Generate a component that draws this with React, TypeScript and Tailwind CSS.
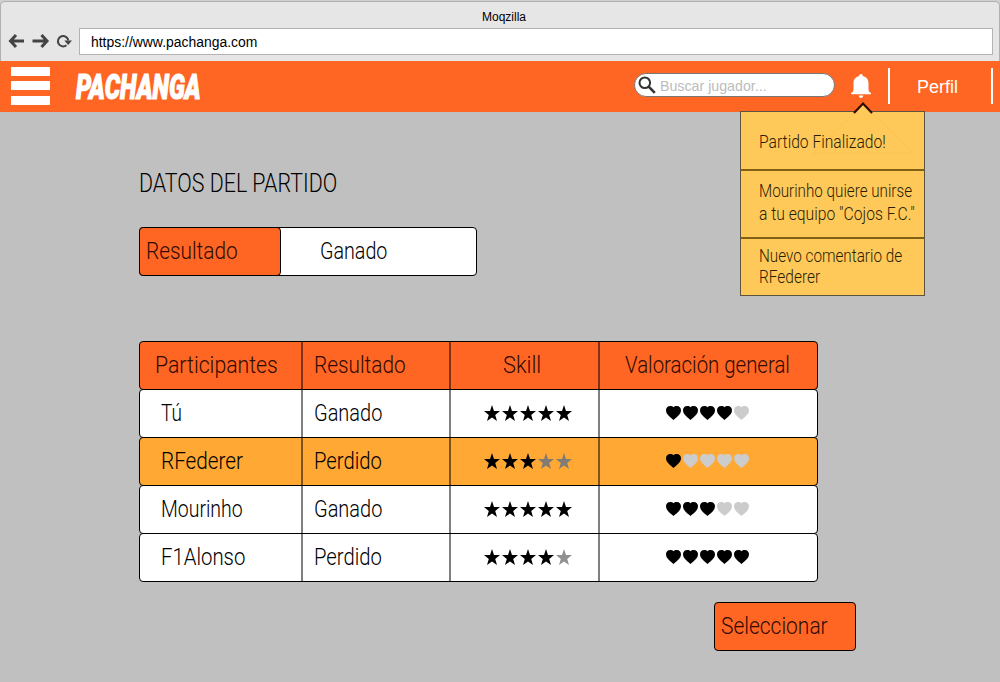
import { useLayoutEffect, useRef, useState } from "react";

function Fit({ w, className = "", children }: { w: number; className?: string; children: string }) {
  const ref = useRef<HTMLSpanElement>(null);
  const [scale, setScale] = useState(1);
  useLayoutEffect(() => {
    if (ref.current) setScale(w / ref.current.offsetWidth);
  }, [w, children]);
  return (
    <span className={`block whitespace-nowrap ${className}`} style={{ width: w }}>
      <span ref={ref} className="inline-block origin-left" style={{ transform: `scaleX(${scale})` }}>
        {children}
      </span>
    </span>
  );
}

const STAR = "M8 0 L10 6 L16 6.1 L11.2 9.9 L13 16 L8 12.4 L3 16 L4.8 9.9 L0 6.1 L6 6 Z";
const HEART =
  "M7.5 14 C5.6 12 0 9 0 4.3 C0 1.7 1.7 0 4.2 0 C5.8 0 6.9 .4 7.5 1.3 C8.1 .4 9.2 0 10.8 0 C13.3 0 15 1.7 15 4.3 C15 9 9.4 12 7.5 14 Z";

function Stars({ n, off }: { n: number; off: string }) {
  return (
    <div className="flex gap-[2px]">
      {[0, 1, 2, 3, 4].map((i) => (
        <svg key={i} viewBox="0 0 16 16" className={`h-4 w-4 ${i < n ? "fill-black" : off}`}>
          <path d={STAR} />
        </svg>
      ))}
    </div>
  );
}

function Hearts({ n }: { n: number }) {
  return (
    <div className="flex gap-[2px]">
      {[0, 1, 2, 3, 4].map((i) => (
        <svg key={i} viewBox="0 0 15 14" className={`h-[14px] w-[15px] ${i < n ? "fill-black" : "fill-[#cccccc]"}`}>
          <path d={HEART} />
        </svg>
      ))}
    </div>
  );
}

const ROWS = [
  { name: "Tú", nw: 21, res: "Ganado", stars: 5, hearts: 4, bg: "bg-white", off: "fill-[#999999]" },
  { name: "RFederer", nw: 82, res: "Perdido", stars: 3, hearts: 1, bg: "bg-[#ffa834]", off: "fill-[#807b74]" },
  { name: "Mourinho", nw: 82, res: "Ganado", stars: 5, hearts: 3, bg: "bg-white", off: "fill-[#999999]" },
  { name: "F1Alonso", nw: 84, res: "Perdido", stars: 4, hearts: 5, bg: "bg-white", off: "fill-[#909090]" },
];

const CELL = "flex items-center border-r-2 border-black/50 pb-[2px]";
const ROW = "flex h-[49px] w-[679px] rounded-[4px] border border-black";

export default function App() {
  return (
    <div className="flex h-[682px] w-[1000px] flex-col overflow-hidden bg-[#c0c0c0] font-['Roboto',sans-serif] text-[23.5px] leading-[26px] font-light text-black">
      <div className="h-[61px] shrink-0 bg-[#d0d0d0] pt-px font-['Liberation_Sans',sans-serif] font-normal">
        <div className="flex h-[60px] flex-col rounded-t-[5px] border border-b-0 border-[#b0b0b0] bg-[#e6e6e6]">
          <div className="flex h-[26px] justify-center pt-[7px] pl-[8px] text-[12px] leading-[16px]">Moqzilla</div>
          <div className="flex items-center pl-[7px]">
            <svg viewBox="0 0 66 20" className="mb-px h-5 w-[66px] fill-none stroke-[#444] stroke-[3]">
              <path d="M2.500 10H16M8 4L2.500 10L8 16" />
              <path d="M24.500 10H39M33.500 4L39 10L33.500 16" />
              <path d="M58.500 14.200A5.200 5.200 0 1 1 60.300 9.500" className="stroke-2" />
              <path d="M56.300 9.500H64L60.200 14Z" className="fill-[#444] stroke-none" />
            </svg>
            <div className="ml-[5px] flex h-[27px] w-[914px] items-center border border-[#b3b3b3] bg-white pl-[11px] text-[14px]">
              <Fit w={166}>https://www.pachanga.com</Fit>
            </div>
          </div>
        </div>
      </div>

      <header className="flex h-[51px] shrink-0 items-center bg-[#ff6624] pb-[2px]">
        <div className="ml-[11px] flex h-[38px] w-[39px] flex-col justify-between">
          <div className="h-[9px] bg-white" />
          <div className="h-[9px] bg-white" />
          <div className="h-[9px] bg-white" />
        </div>
        <Fit w={125} className="ml-[26px] pt-[4px] text-[35px] leading-[46px] font-black text-white italic [-webkit-text-stroke:1.2px_white]">PACHANGA</Fit>
        <div className="mb-[2px] ml-[433px] flex h-[24px] w-[201px] items-center rounded-full border border-[#777] bg-white pl-[3px] font-['Liberation_Sans',sans-serif] text-[15px] font-normal text-[#bcbcbc]">
          <svg viewBox="0 0 18 18" className="mr-[4px] h-[18px] w-[18px] fill-none stroke-[#333]">
            <circle cx="6.800" cy="6.800" r="5.300" className="stroke-2" />
            <path d="M10.700 10.700L16.800 16.800" className="stroke-[2.600]" />
          </svg>
          <Fit w={107} className="pt-[2px]">Buscar jugador...</Fit>
        </div>
        <svg viewBox="0 0 20 24" className="ml-[16px] h-6 w-5 fill-white">
          <path d="M10 0C11.200 0 11.800 .8 11.800 2C15.500 2.800 17.500 5.500 17.500 9V15C17.500 17 18 18 20 19V20.300H0V19C2 18 2.500 17 2.500 15V9C2.500 5.500 4.500 2.800 8.200 2C8.200 .8 8.800 0 10 0ZM7.800 21.500H12.200C12.200 23 11.200 24 10 24S7.800 23 7.800 21.500Z" />
        </svg>
        <div className="ml-[17px] h-9 w-[2px] bg-white" />
        <Fit w={41} className="ml-[27px] pt-[2px] font-['Liberation_Sans',sans-serif] text-[18px] font-normal text-white">Perfil</Fit>
        <div className="ml-[33px] h-9 w-[2px] bg-white" />
      </header>

      <main className="flex items-start">
        <div className="w-[740px] shrink-0 pl-[139px]">
          <Fit w={198} className="mt-[58px] text-[25.500px]">DATOS DEL PARTIDO</Fit>
          <div className="mt-[31px] flex h-[49px] w-[338px] items-center rounded-[4px] border border-black bg-white">
            <div className="-my-px -ml-px flex h-[49px] w-[142px] items-center rounded-[4px] border border-black bg-[#ff6624] pb-[2px] pl-[6px] text-[#300b00]">
              <Fit w={92}>Resultado</Fit>
            </div>
            <Fit w={67} className="ml-[39px] pb-[2px]">Ganado</Fit>
          </div>
          <div className="mt-[65px]">
            <div className={`${ROW} bg-[#ff6624] text-[#300b00]`}>
              <div className={`${CELL} w-[163px] pl-[15px]`}><Fit w={123}>Participantes</Fit></div>
              <div className={`${CELL} w-[148px] pl-[11px]`}><Fit w={92}>Resultado</Fit></div>
              <div className={`${CELL} w-[149px] pl-[52px]`}><Fit w={38}>Skill</Fit></div>
              <div className="flex items-center pb-[2px] pl-[25px]"><Fit w={165}>Valoración general</Fit></div>
            </div>
            {ROWS.map((r) => (
              <div key={r.name} className={`${ROW} ${r.bg} -mt-px`}>
                <div className={`${CELL} w-[163px] pl-[21px]`}><Fit w={r.nw}>{r.name}</Fit></div>
                <div className={`${CELL} w-[148px] pl-[11px]`}><Fit w={68}>{r.res}</Fit></div>
                <div className={`${CELL} w-[149px] pl-[33px]`}><Stars n={r.stars} off={r.off} /></div>
                <div className="flex items-center pb-px pl-[66px]"><Hearts n={r.hearts} /></div>
              </div>
            ))}
          </div>
          <div className="mt-[20px] ml-[575px] flex h-[49px] w-[142px] items-center rounded-[4px] border border-black bg-[#ff6624] pb-[2px] pl-[6px] text-[#300b00]">
            <Fit w={107}>Seleccionar</Fit>
          </div>
        </div>

        <div className="relative -mt-px w-[185px] border border-[#5c5340] bg-[#ffc95a] text-[17.5px] leading-[23px] text-[#2b1d00]">
          <svg viewBox="0 0 104 54" className="absolute -top-[11px] left-[70px] h-[54px] w-[104px]">
            <path d="M52 3L2 52H102Z" className="fill-none stroke-[#fdc24f]" />
            <path d="M43 12L52 2.500L61 12" className="fill-[#ffc95a] stroke-[#300b00] stroke-[2.2]" />
          </svg>
          <div className="relative flex h-[57px] items-center pt-[3px] pl-[18px]"><Fit w={127}>Partido Finalizado!</Fit></div>
          <div className="flex h-[70px] flex-col justify-center border-y-2 border-[#806116] pb-[2px] pl-[18px]">
            <Fit w={153}>Mourinho quiere unirse</Fit>
            <Fit w={156}>{'a tu equipo "Cojos F.C."'}</Fit>
          </div>
          <div className="flex h-[56px] flex-col justify-center pl-[18px] leading-[21px]">
            <Fit w={143}>Nuevo comentario de</Fit>
            <Fit w={61}>RFederer</Fit>
          </div>
        </div>
      </main>
    </div>
  );
}
